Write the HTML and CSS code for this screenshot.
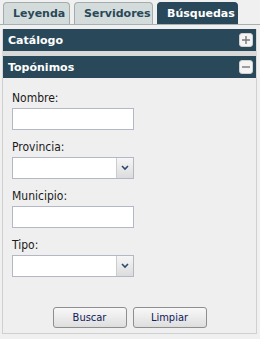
FILE: index.html
```html
<!DOCTYPE html>
<html lang="es">
<head>
    <meta charset="UTF-8">
    <title>Búsquedas</title>
    <link rel="stylesheet" href="styles.css">
</head>
<body>
    <div class="tabs">
        <div class="tab">Leyenda</div>
        <div class="tab">Servidores</div>
        <div class="tab active">Búsquedas</div>
    </div>

    <div class="accordion">
        <div class="acc-header">
            <span>Catálogo</span>
            <span class="toggle">
                <svg width="10" height="10" viewBox="0 0 10 10"><path d="M1 5h8M5 1v8" stroke="#777" stroke-width="1.4"/></svg>
            </span>
        </div>
        <div class="acc-header">
            <span>Topónimos</span>
            <span class="toggle">
                <svg width="10" height="10" viewBox="0 0 10 10"><path d="M1 5h8" stroke="#777" stroke-width="1.4"/></svg>
            </span>
        </div>
        <div class="acc-body">
            <form class="search-form">
                <div class="field">
                    <label for="nombre">Nombre:</label>
                    <input type="text" id="nombre" class="text-input">
                </div>
                <div class="field">
                    <label>Provincia:</label>
                    <div class="combo">
                        <span class="combo-text"></span>
                        <span class="combo-btn">
                            <svg width="8" height="6" viewBox="0 0 8 6"><path d="M1 1l3 3 3-3" fill="none" stroke="#2c4a6e" stroke-width="1.6"/></svg>
                        </span>
                    </div>
                </div>
                <div class="field">
                    <label for="municipio">Municipio:</label>
                    <input type="text" id="municipio" class="text-input">
                </div>
                <div class="field">
                    <label>Tipo:</label>
                    <div class="combo">
                        <span class="combo-text"></span>
                        <span class="combo-btn">
                            <svg width="8" height="6" viewBox="0 0 8 6"><path d="M1 1l3 3 3-3" fill="none" stroke="#2c4a6e" stroke-width="1.6"/></svg>
                        </span>
                    </div>
                </div>
                <div class="actions">
                    <button type="button" class="btn">Buscar</button>
                    <button type="button" class="btn">Limpiar</button>
                </div>
            </form>
        </div>
    </div>
</body>
</html>
```

FILE: styles.css
```css
* {
    box-sizing: border-box;
    margin: 0;
    padding: 0;
}

body {
    background-color: #f0f0f0;
    width: 260px;
    height: 339px;
    overflow: hidden;
}

.tabs {
    display: flex;
    gap: 4px;
    padding: 2px 3px 0 3px;
    border-bottom: 1px solid #a9b0b0;
}

.tab {
    height: 22px;
    padding: 0 9px;
    display: flex;
    align-items: center;
    font-family: "DejaVu Sans", Verdana, sans-serif;
    font-weight: bold;
    font-size: 11px;
    color: #2a4858;
    background-color: #d3dbdb;
    border: 1px solid #a3adad;
    border-bottom: none;
    border-radius: 4px 4px 0 0;
}

.tab:nth-child(1) {
    width: 67px;
}

.tab:nth-child(2) {
    width: 79px;
}

.tab:nth-child(3) {
    width: 81px;
}

.tab.active {
    background-color: #294859;
    border-color: #294859;
    color: #ffffff;
}

.accordion {
    margin: 4px 3px 0 2px;
    display: flex;
    flex-direction: column;
    gap: 5px;
    background-color: #d8d8d8;
    height: 305px;
}

.acc-header {
    height: 22px;
    margin-left: 1px;
    margin-right: 1px;
    padding: 0 3px 0 5px;
    display: flex;
    align-items: center;
    justify-content: space-between;
    background-color: #294859;
    color: #ffffff;
    font-family: "DejaVu Sans", Verdana, sans-serif;
    font-weight: bold;
    font-size: 11px;
}

.toggle {
    width: 14px;
    height: 14px;
    display: flex;
    align-items: center;
    justify-content: center;
    background-color: #f4f4f4;
    border: 1px solid #d0d0d0;
    border-radius: 3px;
}

.acc-body {
    flex: 1;
    margin-top: -5px;
    background-color: #efefef;
    border: 1px solid #d0d0d0;
    border-top: none;
    padding: 13px 0 0 9px;
}

.search-form {
    display: flex;
    flex-direction: column;
    height: 100%;
}

.field {
    display: flex;
    flex-direction: column;
    gap: 3px;
    margin-bottom: 10px;
}

.field label {
    font-family: "DejaVu Sans Condensed", Tahoma, sans-serif;
    font-size: 12px;
    color: #1a1a1a;
    height: 14px;
}

.text-input {
    width: 122px;
    height: 22px;
    border: 1px solid #b4b8c4;
    background-color: #ffffff;
}

.combo {
    width: 122px;
    height: 22px;
    display: flex;
    border: 1px solid #b4b8c4;
    background-color: #ffffff;
}

.combo-text {
    flex: 1;
}

.combo-btn {
    width: 17px;
    display: flex;
    align-items: center;
    justify-content: center;
    border-left: 1px solid #c8ccd4;
    background: linear-gradient(#f6f6f6, #dcdcdc);
}

.actions {
    display: flex;
    justify-content: center;
    gap: 6px;
    margin-top: auto;
    margin-bottom: 5px;
    padding-right: 9px;
}

.btn {
    width: 74px;
    height: 21px;
    font-family: "DejaVu Sans Condensed", Tahoma, sans-serif;
    font-size: 11px;
    color: #10205a;
    background: linear-gradient(#f8f8f8, #dedede);
    border: 1px solid #8e8e8e;
    border-radius: 3px;
}
```
